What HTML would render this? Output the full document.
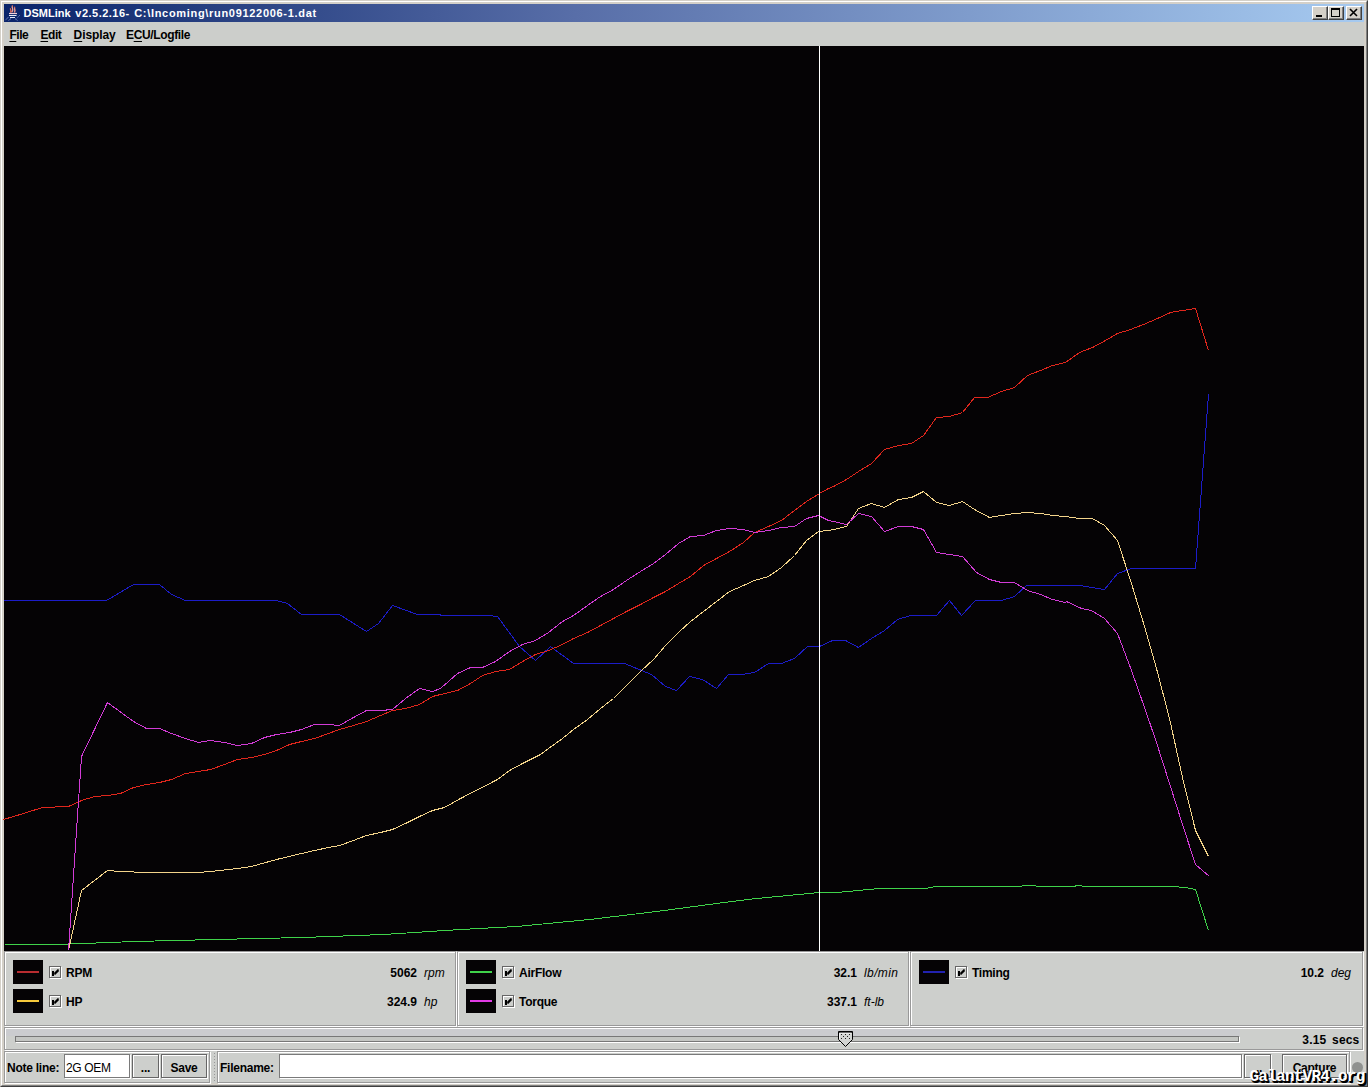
<!DOCTYPE html>
<html><head><meta charset="utf-8"><title>DSMLink</title>
<style>
html,body{margin:0;padding:0;}
body{width:1368px;height:1087px;overflow:hidden;background:#d4d0c8;position:relative;font-family:"Liberation Sans",sans-serif;font-size:12px;color:#000;}
.abs{position:absolute;}
#frame{position:absolute;left:0;top:0;width:1366px;height:1085px;border:1px solid #d4d0c8;border-right-color:#404040;border-bottom-color:#404040;}
#frame2{position:absolute;left:1px;top:1px;width:1364px;height:1083px;border:1px solid #fff;border-right-color:#808080;border-bottom-color:#808080;}
#title{position:absolute;left:4px;top:4px;width:1360px;height:18px;background:linear-gradient(to right,#0a246a 0%,#586ea8 42%,#a6caf0 100%);}
#title .txt{position:absolute;left:20px;top:3px;font:bold 11px "Liberation Sans",sans-serif;color:#fff;white-space:nowrap;letter-spacing:0.35px;}
.wbtn{position:absolute;top:2px;width:14px;height:12px;background:#d4d0c8;border:1px solid;border-color:#fff #404040 #404040 #fff;box-shadow:inset -1px -1px 0 #808080;}
#menu{position:absolute;left:4px;top:22px;width:1360px;height:24px;background:#cccecb;}
#menu span{position:absolute;top:6px;font:bold 12px "Liberation Sans",sans-serif;white-space:nowrap;letter-spacing:-0.45px;}
#menu u{text-decoration:underline;text-decoration-thickness:1px;text-underline-offset:2px;text-decoration-skip-ink:none;}
#chart{position:absolute;left:4px;top:46px;width:1360px;height:905px;background:#050305;}
#bottom{position:absolute;left:4px;top:951px;width:1360px;height:132px;background:#cdcfcc;}
.panel{position:absolute;top:951px;height:75px;border:1px solid #999;box-shadow:1px 1px 0 #fff, inset 1px 1px 0 #fff;box-sizing:border-box;}
.sw{position:absolute;width:30px;height:24px;background:#050305;}
.sw i{position:absolute;left:4px;top:11px;width:22px;height:2px;}
.cb{position:absolute;width:10px;height:10px;background:#cdcfcc;border:1px solid #666;box-shadow:inset 1px 1px 0 #fff, 1px 1px 0 #fff;}
.lbl{position:absolute;font:bold 12px "Liberation Sans",sans-serif;white-space:nowrap;letter-spacing:-0.25px;}
.val{position:absolute;font:bold 12px "Liberation Sans",sans-serif;white-space:nowrap;text-align:right;}
.unit{position:absolute;font:italic 12px "Liberation Sans",sans-serif;white-space:nowrap;}
.btn{position:absolute;top:1054px;height:24px;padding-top:2px;letter-spacing:-0.25px;box-sizing:border-box;border:1px solid #666;box-shadow:inset 1px 1px 0 #fff, 1px 1px 0 #fff;background:#cdcfcc;font:bold 12px "Liberation Sans",sans-serif;text-align:center;line-height:22px;}
.tf{position:absolute;top:1054px;height:24px;padding-top:2px;letter-spacing:-0.35px;box-sizing:border-box;border:1px solid #7a7a7a;box-shadow:1px 1px 0 #fff;background:#fff;font:12px "Liberation Sans",sans-serif;line-height:22px;padding-left:1px;}
</style></head><body>
<div id="frame"></div><div id="frame2"></div>
<div id="title">
<svg class="abs" style="left:0px;top:1px" width="18" height="17" viewBox="0 0 18 17">
<path d="M8.6 0.3 C7.2 2.4 10.2 3.4 7.6 7.4 M10.8 1.8 C9.8 3.6 12 4.6 10.4 7.6 M6.6 3.2 C6 4.8 7.6 5.6 6.4 7.6" stroke="#d8695c" stroke-width="1.3" fill="none"/>
<path d="M8.2 1.6 C7.8 3 9.4 3.8 8.6 6.8 M10.6 3.4 C10.4 4.6 11.2 5.4 10.6 6.8" stroke="#f3d6d6" stroke-width="0.7" fill="none"/>
<path d="M5 8.5 H13" stroke="#f0d0dc" stroke-width="1.2" fill="none"/>
<path d="M5 10.5 H12.5 M6 12.5 H11" stroke="#e6eaf8" stroke-width="1" fill="none"/>
<path d="M4.5 12 L1 15.6 M7 13.6 L4 15.8 M11 13.6 L14 15.8 M15.6 10.4 L13 13.2" stroke="#93a3da" stroke-width="0.9" stroke-dasharray="1 0.7" fill="none"/>
</svg>
<div class="txt" style="left:19.6px;letter-spacing:0">DSMLink</div><div class="txt" style="left:71.3px;letter-spacing:0.49px">v2.5.2.16-</div><div class="txt" style="left:130.2px;letter-spacing:0.69px">C:\Incoming\run09122006-1.dat</div>
<div class="wbtn" style="left:1308px"><svg width="14" height="12" class="abs" style="left:0;top:0"><rect x="3" y="8" width="6" height="2" fill="#000"/></svg></div>
<div class="wbtn" style="left:1324px"><svg width="14" height="12" class="abs" style="left:0;top:0"><rect x="2.5" y="1.5" width="8" height="8" fill="none" stroke="#000"/><rect x="2" y="1" width="9" height="2" fill="#000"/></svg></div>
<div class="wbtn" style="left:1342px"><svg width="14" height="12" class="abs" style="left:0;top:0"><path d="M3 2 L10 9 M10 2 L3 9" stroke="#000" stroke-width="1.6"/></svg></div>
</div>
<div id="menu">
<span style="left:5.4px"><u>F</u>ile</span>
<span style="left:36.5px"><u>E</u>dit</span>
<span style="left:69.6px;letter-spacing:-0.1px"><u>D</u>isplay</span>
<span style="left:122px;letter-spacing:-0.35px">E<u>C</u>U/Logfile</span>
</div>
<div id="chart">
<svg class="abs" style="left:-4px;top:-46px" width="1368" height="1087" viewBox="0 0 1368 1087">
<polyline points="4.5,944.5 57.5,944.5 134.5,941.5 215.5,939.5 302.5,937.5 383.5,934.5 460.5,929.5 516.5,926.5 589.5,919.5 656.5,911.5 716.5,903.5 756.5,898.5 819.5,892.5 836.5,892.5 879.5,888.5 912.5,888.5 925.5,888.5 935.5,886.5 972.5,886.5 1018.5,886.5 1025.5,885.5 1045.5,886.5 1072.5,886.5 1078.5,885.5 1085.5,886.5 1172.5,886.5 1185.5,887.5 1195.5,889.5 1208.5,930.5" fill="none" stroke="#3fd24a" stroke-width="1" shape-rendering="crispEdges"/>
<polyline points="3.5,600.5 106.5,600.5 133.5,584.5 159.5,584.5 171.5,594.5 185.5,600.5 276.5,600.5 287.5,603.5 301.5,614.5 339.5,614.5 366.5,631.5 378.5,623.5 392.5,605.5 417.5,614.5 440.5,614.5 440.5,615.5 487.5,615.5 497.5,616.5 519.5,646.5 535.5,660.5 550.5,646.5 573.5,663.5 624.5,663.5 651.5,674.5 665.5,686.5 676.5,690.5 689.5,676.5 702.5,679.5 716.5,688.5 728.5,674.5 741.5,674.5 754.5,672.5 768.5,663.5 781.5,663.5 794.5,658.5 807.5,646.5 819.5,646.5 832.5,640.5 845.5,640.5 858.5,647.5 871.5,638.5 884.5,630.5 897.5,619.5 910.5,615.5 911.5,615.5 936.5,615.5 949.5,600.5 961.5,615.5 975.5,600.5 1001.5,600.5 1014.5,596.5 1026.5,585.5 1079.5,585.5 1104.5,589.5 1117.5,573.5 1131.5,568.5 1195.5,568.5 1195.5,568.5 1208.5,394.5" fill="none" stroke="#1c1cc8" stroke-width="1" shape-rendering="crispEdges"/>
<polyline points="3.5,819.5 23.5,813.5 42.5,807.5 68.5,806.5 81.5,800.5 94.5,796.5 107.5,795.5 120.5,793.5 133.5,787.5 146.5,784.5 159.5,782.5 171.5,779.5 185.5,773.5 198.5,771.5 210.5,769.5 224.5,764.5 237.5,759.5 251.5,757.5 264.5,754.5 276.5,750.5 289.5,744.5 301.5,741.5 314.5,738.5 328.5,733.5 339.5,729.5 353.5,725.5 366.5,721.5 380.5,715.5 392.5,710.5 405.5,708.5 419.5,704.5 432.5,696.5 440.5,694.5 457.5,690.5 470.5,683.5 482.5,675.5 495.5,671.5 509.5,669.5 522.5,661.5 535.5,654.5 548.5,650.5 562.5,644.5 573.5,638.5 587.5,632.5 600.5,625.5 613.5,618.5 626.5,611.5 640.5,604.5 653.5,597.5 665.5,591.5 678.5,583.5 690.5,576.5 703.5,565.5 716.5,558.5 729.5,551.5 743.5,542.5 754.5,532.5 768.5,526.5 781.5,520.5 794.5,510.5 806.5,501.5 819.5,493.5 828.5,488.5 833.5,486.5 846.5,479.5 858.5,471.5 871.5,463.5 884.5,449.5 898.5,445.5 911.5,443.5 923.5,435.5 936.5,417.5 949.5,416.5 962.5,412.5 974.5,397.5 987.5,397.5 1001.5,391.5 1014.5,387.5 1027.5,375.5 1040.5,370.5 1052.5,365.5 1065.5,362.5 1079.5,352.5 1092.5,347.5 1105.5,340.5 1117.5,333.5 1130.5,329.5 1143.5,324.5 1157.5,318.5 1170.5,312.5 1182.5,310.5 1195.5,308.5 1208.5,350.5" fill="none" stroke="#e0261c" stroke-width="1" shape-rendering="crispEdges"/>
<polyline points="68.5,950.5 81.5,890.5 107.5,870.5 120.5,871.5 146.5,872.5 171.5,872.5 198.5,872.5 210.5,871.5 237.5,868.5 251.5,866.5 276.5,859.5 301.5,853.5 314.5,850.5 328.5,847.5 339.5,845.5 353.5,840.5 366.5,835.5 380.5,832.5 392.5,829.5 405.5,823.5 419.5,816.5 432.5,810.5 444.5,807.5 460.5,798.5 497.5,779.5 509.5,770.5 522.5,763.5 540.5,754.5 548.5,748.5 562.5,738.5 573.5,729.5 587.5,719.5 600.5,708.5 613.5,698.5 626.5,685.5 640.5,671.5 653.5,659.5 665.5,645.5 678.5,632.5 690.5,621.5 703.5,611.5 716.5,601.5 729.5,591.5 743.5,585.5 754.5,580.5 768.5,576.5 781.5,567.5 794.5,555.5 806.5,540.5 818.5,531.5 828.5,530.5 833.5,529.5 846.5,526.5 858.5,508.5 871.5,503.5 884.5,507.5 898.5,499.5 911.5,497.5 923.5,491.5 936.5,502.5 949.5,505.5 962.5,501.5 974.5,509.5 989.5,517.5 1001.5,515.5 1014.5,513.5 1027.5,512.5 1040.5,513.5 1052.5,515.5 1065.5,516.5 1079.5,518.5 1092.5,518.5 1104.5,525.5 1117.5,540.5 1131.5,583.5 1144.5,626.5 1156.5,668.5 1169.5,718.5 1182.5,777.5 1195.5,830.5 1208.5,856.5" fill="none" stroke="#f3d48a" stroke-width="1" shape-rendering="crispEdges"/>
<polyline points="68.5,950.5 81.5,756.5 107.5,702.5 133.5,721.5 146.5,728.5 159.5,728.5 171.5,733.5 185.5,738.5 198.5,742.5 210.5,740.5 224.5,742.5 237.5,745.5 251.5,743.5 264.5,737.5 276.5,734.5 289.5,732.5 301.5,729.5 314.5,724.5 328.5,724.5 339.5,725.5 353.5,717.5 366.5,710.5 380.5,710.5 392.5,709.5 405.5,698.5 419.5,688.5 432.5,691.5 440.5,688.5 457.5,673.5 470.5,667.5 482.5,667.5 495.5,661.5 509.5,651.5 522.5,644.5 535.5,640.5 548.5,632.5 562.5,621.5 573.5,615.5 587.5,605.5 600.5,596.5 613.5,589.5 626.5,580.5 640.5,571.5 653.5,563.5 665.5,554.5 678.5,543.5 690.5,536.5 703.5,535.5 716.5,530.5 729.5,528.5 743.5,529.5 754.5,532.5 768.5,530.5 781.5,527.5 794.5,526.5 806.5,518.5 818.5,515.5 828.5,520.5 833.5,521.5 846.5,524.5 858.5,513.5 871.5,516.5 884.5,531.5 898.5,526.5 911.5,526.5 923.5,529.5 936.5,552.5 949.5,554.5 962.5,556.5 976.5,572.5 989.5,579.5 1001.5,582.5 1014.5,582.5 1027.5,590.5 1040.5,594.5 1052.5,599.5 1065.5,602.5 1066.5,601.5 1081.5,608.5 1091.5,610.5 1104.5,618.5 1117.5,633.5 1131.5,670.5 1144.5,707.5 1156.5,742.5 1169.5,783.5 1182.5,824.5 1195.5,864.5 1209.5,876.5" fill="none" stroke="#d23bd6" stroke-width="1" shape-rendering="crispEdges"/>
<line x1="819.5" y1="46" x2="819.5" y2="951" stroke="#fff" stroke-width="1"/>
</svg>
</div>
<div id="bottom"></div>

<!-- panels -->
<div class="panel" style="left:4px;width:452px"></div>
<div class="panel" style="left:457px;width:452px"></div>
<div class="panel" style="left:910px;width:453px"></div>

<div class="sw" style="left:13px;top:960px"><i style="background:#b82c30"></i></div>
<div class="cb" style="left:49px;top:966px"><svg width="10" height="10" viewBox="1 1 10 10" shape-rendering="crispEdges" style="position:absolute;left:0;top:0"><rect x="3" y="5" width="2" height="5" fill="#000"/><path d="M9.5 3.5 L5.5 7.5 M9.5 4.5 L5.5 8.5" stroke="#000" stroke-width="1.7" shape-rendering="auto"/></svg></div>
<div class="lbl" style="left:66px;top:966px">RPM</div>
<div class="val" style="right:951px;top:966px">5062</div>
<div class="unit" style="left:424px;top:966px">rpm</div>

<div class="sw" style="left:13px;top:989px"><i style="background:#f6c93c"></i></div>
<div class="cb" style="left:49px;top:995px"><svg width="10" height="10" viewBox="1 1 10 10" shape-rendering="crispEdges" style="position:absolute;left:0;top:0"><rect x="3" y="5" width="2" height="5" fill="#000"/><path d="M9.5 3.5 L5.5 7.5 M9.5 4.5 L5.5 8.5" stroke="#000" stroke-width="1.7" shape-rendering="auto"/></svg></div>
<div class="lbl" style="left:66px;top:995px">HP</div>
<div class="val" style="right:951px;top:995px">324.9</div>
<div class="unit" style="left:424px;top:995px">hp</div>

<div class="sw" style="left:466px;top:960px"><i style="background:#3fd24a"></i></div>
<div class="cb" style="left:502px;top:966px"><svg width="10" height="10" viewBox="1 1 10 10" shape-rendering="crispEdges" style="position:absolute;left:0;top:0"><rect x="3" y="5" width="2" height="5" fill="#000"/><path d="M9.5 3.5 L5.5 7.5 M9.5 4.5 L5.5 8.5" stroke="#000" stroke-width="1.7" shape-rendering="auto"/></svg></div>
<div class="lbl" style="left:519px;top:966px">AirFlow</div>
<div class="val" style="right:511px;top:966px">32.1</div>
<div class="unit" style="left:864px;top:966px;letter-spacing:0.4px">lb/min</div>

<div class="sw" style="left:466px;top:989px"><i style="background:#e23be6"></i></div>
<div class="cb" style="left:502px;top:995px"><svg width="10" height="10" viewBox="1 1 10 10" shape-rendering="crispEdges" style="position:absolute;left:0;top:0"><rect x="3" y="5" width="2" height="5" fill="#000"/><path d="M9.5 3.5 L5.5 7.5 M9.5 4.5 L5.5 8.5" stroke="#000" stroke-width="1.7" shape-rendering="auto"/></svg></div>
<div class="lbl" style="left:519px;top:995px">Torque</div>
<div class="val" style="right:511px;top:995px">337.1</div>
<div class="unit" style="left:864px;top:995px">ft-lb</div>

<div class="sw" style="left:919px;top:960px"><i style="background:#2222b0"></i></div>
<div class="cb" style="left:955px;top:966px"><svg width="10" height="10" viewBox="1 1 10 10" shape-rendering="crispEdges" style="position:absolute;left:0;top:0"><rect x="3" y="5" width="2" height="5" fill="#000"/><path d="M9.5 3.5 L5.5 7.5 M9.5 4.5 L5.5 8.5" stroke="#000" stroke-width="1.7" shape-rendering="auto"/></svg></div>
<div class="lbl" style="left:972px;top:966px">Timing</div>
<div class="val" style="right:44px;top:966px">10.2</div>
<div class="unit" style="left:1331px;top:966px">deg</div>

<!-- slider panel -->
<div class="abs" style="left:4px;top:1027px;width:1359px;height:23px;border:1px solid #999;box-shadow:1px 1px 0 #fff, inset 1px 1px 0 #fff;box-sizing:border-box;"></div>
<div class="abs" style="left:6px;top:1029px;width:1234px;height:7px;background:rgba(190,190,228,0.14);"></div>
<div class="abs" style="left:15px;top:1036px;width:1224px;height:6px;box-sizing:border-box;border:1px solid #777;background:#c4c6c3;box-shadow:1px 1px 0 #fff;"></div>
<svg class="abs" style="left:838px;top:1031px" width="15" height="17" viewBox="0 0 15 17">
<path d="M0.5 0.5 H14.5 V8.5 L7.5 15.5 L0.5 8.5 Z" fill="#d2d4d2" stroke="#000" stroke-width="1"/>
<path d="M1 1.2 H14" stroke="#000" stroke-width="1.2"/>
<path d="M1.5 8 V2.2 H13.5" fill="none" stroke="#f4f4f4" stroke-width="1"/>
<g fill="#222" shape-rendering="crispEdges"><rect x="3" y="3" width="1" height="1"/><rect x="7" y="3" width="1" height="1"/><rect x="11" y="3" width="1" height="1"/><rect x="5" y="5" width="1" height="1"/><rect x="9" y="5" width="1" height="1"/><rect x="3" y="7" width="1" height="1"/><rect x="7" y="7" width="1" height="1"/><rect x="11" y="7" width="1" height="1"/></g>
</svg>
<div class="lbl" style="right:8.5px;top:1033px;word-spacing:2px;letter-spacing:0.2px">3.15 secs</div>

<!-- toolbars -->
<div class="abs" style="left:4px;top:1051px;width:206px;height:32px;border:1px solid #999;box-shadow:1px 1px 0 #fff, inset 1px 1px 0 #fff;box-sizing:border-box;"></div>
<div class="lbl" style="left:7px;top:1061px">Note line:</div>
<div class="tf" style="left:64px;width:66px">2G OEM</div>
<div class="btn" style="left:132px;width:27px">...</div>
<div class="btn" style="left:161px;width:46px">Save</div>
<div class="abs" style="left:213px;top:1053px;width:4px;height:28px;background:repeating-linear-gradient(to bottom,#999 0 1px,transparent 1px 3px);background-size:1px 3px;background-repeat:repeat-y;background-position:1px 0;"></div>
<div class="abs" style="left:217px;top:1051px;width:1133px;height:32px;border:1px solid #999;box-shadow:1px 1px 0 #fff, inset 1px 1px 0 #fff;box-sizing:border-box;"></div>
<div class="lbl" style="left:220px;top:1061px">Filename:</div>
<div class="tf" style="left:279px;width:963px"></div>
<div class="btn" style="left:1244px;width:27px">...</div>
<div class="btn" style="left:1282px;width:65px">Capture</div>
<div class="abs" style="left:1352px;top:1062px;width:11px;height:11px;border-radius:6px;background:#8f918f;"></div>
<div class="abs" style="left:1249.5px;top:1068px;font:bold 16px 'Liberation Mono',monospace;letter-spacing:-0.75px;color:#fff;text-shadow:1px 1px 0 #000,2px 1px 0 #000,1px 2px 0 #000,2px 2px 0 #000;white-space:nowrap;">GalantVR4.org</div>
</body></html>
